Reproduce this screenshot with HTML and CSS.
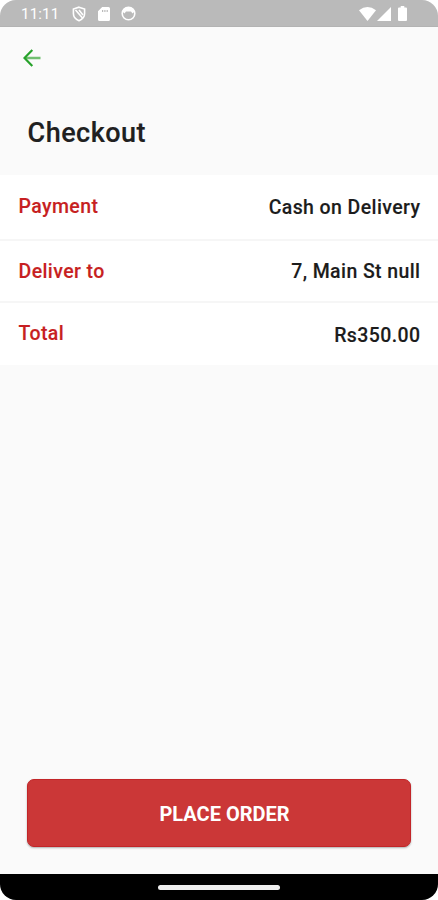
FILE: index.html
```html
<!DOCTYPE html>
<html lang="en">
<head>
<meta charset="utf-8">
<title>Checkout</title>
<link rel="stylesheet" href="styles.css">
</head>
<body>
<div class="phone">
  <header class="status">
    <span class="clock">11:11</span>
    <svg class="shield" width="14" height="16" viewBox="0 0 14 16"><path d="M7 1.200 12.600 3v4.500c0 3.400-2.300 5.900-5.600 7.200C3.700 13.400 1.400 10.900 1.400 7.500V3Z" fill="none" stroke="#fff" stroke-width="1.600"/><path d="M3.500 4 10.500 12M7 4l4 5" stroke="#fff" stroke-width="1.600"/></svg>
    <svg class="card" width="12" height="14" viewBox="0 0 12 14"><path fill="#fff" fill-rule="evenodd" d="M4.200 0H10.500Q12 0 12 1.500V12.500Q12 14 10.500 14H1.500Q0 14 0 12.500V4.200ZM4 3v2h1.200V3ZM6.300 3v2h1.200V3ZM8.600 3v2h1.200V3Z"/></svg>
    <svg class="face" width="15" height="15" viewBox="0 0 15 15"><circle cx="7.500" cy="7.500" r="6.300" fill="none" stroke="#fff" stroke-width="1.600"/><path fill="#fff" d="M1.500 5.500Q2.500 1 7.500 1t6 4.500L11.500 7.500 10 5.500H5L3.500 7.500Z"/></svg>
    <svg class="wifi" width="17" height="14" viewBox="0 0 17 14"><path fill="#fff" d="M0 3.200Q8.500-3 17 3.200L8.500 14Z"/></svg>
    <svg class="signal" width="14" height="14" viewBox="0 0 14 14"><path fill="#fff" d="M14 0V14H0Z"/></svg>
    <svg class="battery" width="9" height="15" viewBox="0 0 9 15"><path fill="#fff" d="M2.700 0h3.600v1.500H8q1 0 1 1V14q0 1-1 1H1q-1 0-1-1V2.500q0-1 1-1h1.700Z"/></svg>
  </header>
  <main class="page">
    <nav class="toolbar">
      <svg width="18" height="18" viewBox="0 0 18 18" fill="none"><path d="M2 9H17.500" stroke="#70bf70" stroke-width="2.400"/><path d="M9.300 1 1.500 9l7.800 8" stroke="#27a22b" stroke-width="2.200"/></svg>
    </nav>
    <h1 class="title">Checkout</h1>
    <dl class="summary">
      <div class="row row-payment"><dt>Payment</dt><dd>Cash on Delivery</dd></div>
      <div class="row row-address"><dt>Deliver to</dt><dd>7, Main St null</dd></div>
      <div class="row row-total"><dt>Total</dt><dd>Rs350.00</dd></div>
    </dl>
    <button class="order">PLACE ORDER</button>
  </main>
  <footer class="navbar"><span class="handle"></span></footer>
</div>
</body>
</html>
```

FILE: styles.css
```css
* { box-sizing: border-box; }
body { margin: 0; background: #fff; font-family: Roboto, "Liberation Sans", sans-serif; }
svg { display: block; flex: none; }
.phone { width: 438px; height: 900px; display: flex; flex-direction: column; border-radius: 16px; overflow: hidden; background: #fafafa; }
.status { height: 27px; flex: none; display: flex; align-items: center; padding: 1px 31px 0 21px; background: #bababa; border-bottom: 1px solid #b3b3b3; }
.clock { width: 51px; color: #fff; font-size: 15px; line-height: 18px; letter-spacing: .2px; padding-top: 1px; }
.card { margin-left: 12px; }
.face { margin-left: 11px; }
.wifi { margin-left: auto; }
.signal { margin-left: 1px; }
.battery { margin-left: 7px; }
.page { flex: 1; display: flex; flex-direction: column; }
.toolbar { height: 63px; padding: 22px 23px 0; }
.title { margin: 0; height: 85px; padding: 27px 27.500px 0; font-size: 27px; line-height: 32px; font-weight: 500; letter-spacing: .5px; -webkit-text-stroke: .15px; color: #202020; }
.summary { margin: 0; background: #fff; }
.row { display: flex; justify-content: space-between; align-items: flex-start; padding: 0 17.500px 0 18.500px; font-size: 19.500px; line-height: 24px; font-weight: 500; letter-spacing: .4px; -webkit-text-stroke: .12px; border-bottom: 2px solid #f6f6f6; }
.row dt { color: #c71f22; }
.row dd { margin: 0; color: #1c1c1c; }
.row-payment { height: 66px; padding-top: 20px; }
.row-payment dd { padding-top: 1px; }
.row-address { height: 62px; padding-top: 19px; }
.row-total { height: 62px; padding-top: 19px; border: 0; }
.row-total dd { padding-top: 2px; }
.order { margin: auto 27px 27px; height: 68px; padding: 1px 0 0 11px; border: 1px solid #c22528; border-radius: 7px; background: #cb3737; box-shadow: 0 1px 2px rgba(0,0,0,.3); color: #fff; font: 700 20px/24px Roboto, "Liberation Sans", sans-serif; }
.navbar { height: 26px; flex: none; display: flex; justify-content: center; align-items: center; background: #000; }
.handle { width: 122px; height: 5px; border-radius: 3px; background: #eee; }
```
